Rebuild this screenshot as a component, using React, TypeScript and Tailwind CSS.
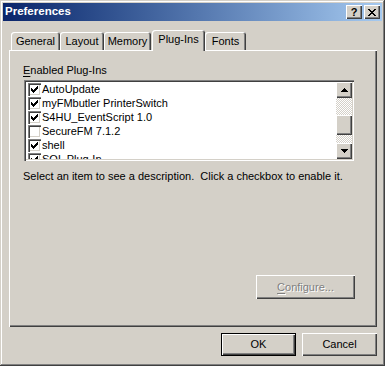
import React from 'react';

const raised = 'shadow-[inset_1px_1px_#fff,inset_-1px_-1px_#404040,inset_-2px_-2px_#808080]';

const plugins = [
  { name: 'AutoUpdate', on: true },
  { name: 'myFMbutler PrinterSwitch', on: true },
  { name: 'S4HU_EventScript 1.0', on: true },
  { name: 'SecureFM 7.1.2', on: false },
  { name: 'shell', on: true },
  { name: 'SQL Plug-In', on: true },
];

const tabs = [
  { label: 'General', w: 'w-[49px]' },
  { label: 'Layout', w: 'w-[44px]' },
  { label: 'Memory', w: 'w-[47px] mr-[1px]' },
  { label: 'Plug-Ins', w: 'w-[53px]', active: true },
  { label: 'Fonts', w: 'w-[41px]' },
];

// classic 7x7 check glyph, one column per x
const checkCols = [5, 6, 7, 6, 5, 4, 3];

const Checkbox = ({ checked }: { checked: boolean }) => (
  <div className="w-[13px] h-[13px] shrink-0 bg-white shadow-[inset_1px_1px_#808080,inset_2px_2px_#404040,inset_-1px_-1px_#fff,inset_-2px_-2px_#d4d0c8]">
    {checked && (
      <svg width="13" height="13" viewBox="0 0 13 13" shapeRendering="crispEdges">
        {checkCols.map((y, i) => (
          <rect key={i} x={3 + i} y={y} width="1" height="3" fill="#000" />
        ))}
      </svg>
    )}
  </div>
);

const Arrow = ({ up }: { up?: boolean }) => (
  <svg width="7" height="4" viewBox="0 0 7 4" shapeRendering="crispEdges">
    {up ? (
      <>
        <rect x="3" y="0" width="1" height="1" fill="#000" />
        <rect x="2" y="1" width="3" height="1" fill="#000" />
        <rect x="1" y="2" width="5" height="1" fill="#000" />
        <rect x="0" y="3" width="7" height="1" fill="#000" />
      </>
    ) : (
      <>
        <rect x="0" y="0" width="7" height="1" fill="#000" />
        <rect x="1" y="1" width="5" height="1" fill="#000" />
        <rect x="2" y="2" width="3" height="1" fill="#000" />
        <rect x="3" y="3" width="1" height="1" fill="#000" />
      </>
    )}
  </svg>
);

const CloseGlyph = () => (
  <svg width="8" height="7" viewBox="0 0 8 7" shapeRendering="crispEdges">
    {[0, 1, 2, 3, 4, 5, 6].map(r => {
      const d = r <= 3 ? r : 6 - r;
      return (
        <g key={r}>
          <rect x={d} y={r} width="2" height="1" fill="#000" />
          <rect x={6 - d} y={r} width="2" height="1" fill="#000" />
        </g>
      );
    })}
  </svg>
);

export default function App() {
  return (
    <div className="w-[385px] h-[366px] bg-[#d4d0c8] p-[3px] flex flex-col font-['Liberation_Sans',Arial,sans-serif] text-[11px] text-black shadow-[inset_-1px_-1px_#404040,inset_1px_1px_#d4d0c8,inset_-2px_-2px_#808080,inset_2px_2px_#fff]">
      {/* title bar */}
      <div className="h-[18px] flex items-center bg-linear-to-r from-[#0a246a] to-[#a6caf0] pl-[2px] pr-[2px]">
        <span className="flex-1 text-white font-bold text-[11.5px] leading-none">Preferences</span>
        <div className="flex gap-[2px]">
          <div className={`w-[16px] h-[14px] bg-[#d4d0c8] flex items-center justify-center ${raised}`}>
            <span className="font-bold text-[11px] leading-none mt-[1px]">?</span>
          </div>
          <div className={`w-[16px] h-[14px] bg-[#d4d0c8] flex items-center justify-center ${raised}`}>
            <CloseGlyph />
          </div>
        </div>
      </div>

      {/* tabs */}
      <div className="relative z-10 flex items-end h-[20px] mt-[9px] ml-[8px]">
        {tabs.map(t => (
          <div
            key={t.label}
            className={`${t.w} bg-[#d4d0c8] rounded-t-[3px] flex justify-center shadow-[inset_1px_1px_#fff,inset_-1px_0_#404040,inset_-2px_0_#808080] ${
              t.active ? 'h-[21px] -mb-[1px] pt-[3px]' : 'h-[18px] pt-[3px]'
            }`}
          >
            <span className="leading-[13px]">{t.label}</span>
          </div>
        ))}
      </div>

      {/* panel */}
      <div className="ml-[6px] w-[368px] h-[277px] flex flex-col shadow-[inset_1px_1px_#fff,inset_-1px_-1px_#404040,inset_-2px_-2px_#808080]">
        <div className="mt-[14px] ml-[14px] leading-[13px]">
          <span className="underline underline-offset-[2px]">E</span>nabled Plug-Ins
        </div>

        <div className="mt-[3px] ml-[15px] w-[330px] h-[81px] bg-white p-[2px] flex shadow-[inset_1px_1px_#808080,inset_2px_2px_#404040,inset_-1px_-1px_#fff,inset_-2px_-2px_#d4d0c8]">
          <div className="flex-1 overflow-hidden">
            {plugins.map(p => (
              <div key={p.name} className="h-[14px] flex items-center pl-[2px] gap-[1px] whitespace-nowrap">
                <Checkbox checked={p.on} />
                <span className="leading-[14px]">{p.name}</span>
              </div>
            ))}
          </div>
          <div className="w-[16px] flex flex-col">
            <div className={`h-[16px] bg-[#d4d0c8] flex items-center justify-center ${raised}`}>
              <Arrow up />
            </div>
            <div className="flex-1 bg-[repeating-conic-gradient(#d4d0c8_0_25%,#fff_0_50%)] bg-size-[2px_2px] flex flex-col">
              <div className={`mt-[17px] h-[20px] bg-[#d4d0c8] ${raised}`} />
            </div>
            <div className={`h-[16px] bg-[#d4d0c8] flex items-center justify-center ${raised}`}>
              <Arrow />
            </div>
          </div>
        </div>

        <div className="mt-[9px] ml-[14px] leading-[13px] whitespace-pre">
          {'Select an item to see a description.  Click a checkbox to enable it.'}
        </div>

        <div className="mt-[92px] flex justify-end pr-[22px]">
          <div className={`w-[99px] h-[24px] flex items-center justify-center text-[#808080] [text-shadow:1px_1px_#fff] ${raised}`}>
            <span>
              <span className="underline underline-offset-[2px]">C</span>onfigure...
            </span>
          </div>
        </div>
      </div>

      {/* dialog buttons */}
      <div className="ml-[6px] w-[368px] mt-[6px] flex justify-end gap-[6px]">
        <div className="w-[75px] h-[23px] border border-black flex items-center justify-center">
          <div className={`w-full h-full flex items-center justify-center ${raised}`}>OK</div>
        </div>
        <div className={`w-[75px] h-[23px] flex items-center justify-center ${raised}`}>Cancel</div>
      </div>
    </div>
  );
}
